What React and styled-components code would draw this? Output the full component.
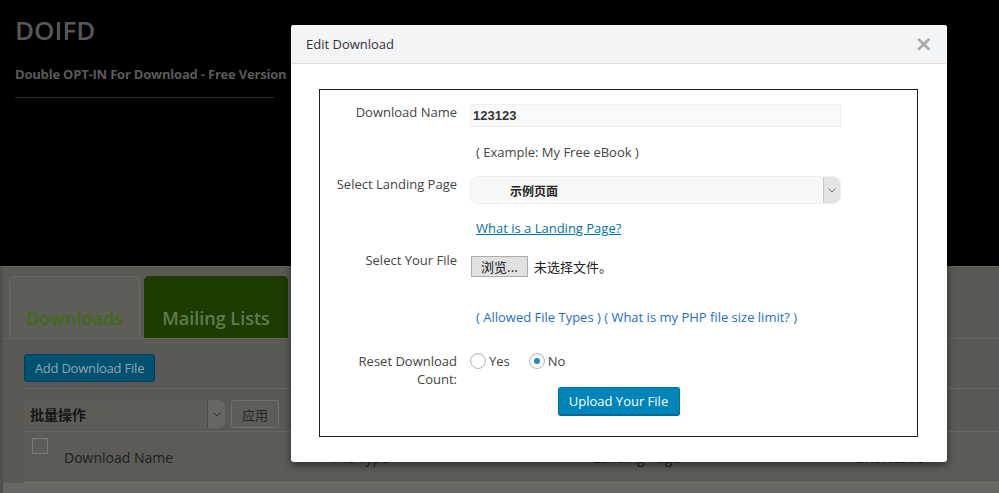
import React from 'react';
import styled, { createGlobalStyle } from 'styled-components';

const GlobalStyle = createGlobalStyle`
  html, body {
    margin: 0;
    padding: 0;
    background: #000000;
    font-family: "Open Sans", "Noto Sans CJK SC", sans-serif;
    overflow: hidden;
  }
  * {
    box-sizing: border-box;
  }
`;

const App = () => {
  return (
    <Page>
      <GlobalStyle />
      <Header>
        <Logo>DOIFD</Logo>
        <Subtitle>Double OPT-IN For Download - Free Version</Subtitle>
        <Rule />
      </Header>

      <Panel>
        <Tabs>
          <Tab active>Downloads</Tab>
          <Tab>Mailing Lists</Tab>
        </Tabs>
        <TabBody>
          <AddButton>Add Download File</AddButton>
          <Divider />
          <BulkRow>
            <BulkSelect>
              <span>批量操作</span>
              <BulkArrow>
                <svg width="8" height="5" viewBox="0 0 8 5">
                  <path d="M0.5 0.5 L4 4 L7.5 0.5" fill="none" stroke="#2a2a2a" strokeWidth="1" />
                </svg>
              </BulkArrow>
            </BulkSelect>
            <ApplyButton>应用</ApplyButton>
          </BulkRow>
        </TabBody>
        <TableHead>
          <CheckCell>
            <Check />
          </CheckCell>
          <HeadCell>Download Name</HeadCell>
          <HeadCell>File Type</HeadCell>
          <HeadCell>Landing Page</HeadCell>
          <HeadCell>Shortcode</HeadCell>
        </TableHead>
        <TableRest />
      </Panel>

      <Modal>
        <ModalHeader>
          <ModalTitle>Edit Download</ModalTitle>
          <Close>×</Close>
        </ModalHeader>
        <ModalBody>
          <FormBox>
            <Row top={13}>
              <Label>Download Name</Label>
              <TextInput>123123</TextInput>
            </Row>
            <Row top={16}>
              <Label />
              <Hint>( Example: My Free eBook )</Hint>
            </Row>
            <Row top={14}>
              <Label>Select Landing Page</Label>
              <Select>
                <SelectText>示例页面</SelectText>
                <SelectArrow>
                  <svg width="8" height="5" viewBox="0 0 8 5">
                    <path d="M0.5 0.5 L4 4 L7.5 0.5" fill="none" stroke="#777" strokeWidth="1" />
                  </svg>
                </SelectArrow>
              </Select>
            </Row>
            <Row top={15}>
              <Label />
              <Link>What is a Landing Page?</Link>
            </Row>
            <Row top={14}>
              <Label>Select Your File</Label>
              <FileField>
                <FileButton>浏览...</FileButton>
                <FileText>未选择文件。</FileText>
              </FileField>
            </Row>
            <Row top={31}>
              <Label />
              <Allowed>( Allowed File Types ) ( What is my PHP file size limit? )</Allowed>
            </Row>
            <Row top={26}>
              <Label>
                Reset Download
                <br />
                Count:
              </Label>
              <Radios>
                <RadioItem>
                  <Radio />
                  Yes
                </RadioItem>
                <RadioItem>
                  <Radio checked />
                  No
                </RadioItem>
              </Radios>
            </Row>
            <Submit>
              <UploadButton>Upload Your File</UploadButton>
            </Submit>
          </FormBox>
        </ModalBody>
      </Modal>
    </Page>
  );
};

export default App;

const Page = styled.div`
  width: 999px;
  height: 493px;
  background: #000000;
  position: relative;
  overflow: hidden;
`;

const Header = styled.div`
  height: 266px;
  padding: 13px 0 0 15px;
`;

const Logo = styled.div`
  font-size: 26px;
  line-height: 34px;
  color: #575757;
  font-weight: 600;
`;

const Subtitle = styled.div`
  margin-top: 18px;
  font-size: 13px;
  line-height: 18px;
  font-weight: 700;
  letter-spacing: -0.2px;
  color: #5a5a5a;
`;

const Rule = styled.div`
  margin-top: 14px;
  width: 259px;
  height: 1px;
  background: #2c2c2c;
`;

const Panel = styled.div`
  background: #5a5953;
  border-top: 1px solid #64635e;
  border-left: 3px solid #50504b;
  height: 227px;
`;

const Tabs = styled.div`
  display: flex;
  gap: 4px;
  padding: 9px 0 0 6px;
  border-bottom: 1px solid #66655f;
`;

const Tab = styled.div`
  width: ${(p) => (p.active ? '131px' : '144px')};
  height: 62px;
  padding-top: 29px;
  text-align: center;
  border-radius: 5px 5px 0 0;
  font-size: 18px;
  font-weight: 600;
  line-height: 24px;
  background: ${(p) => (p.active ? '#5e5d58' : '#1e3c00')};
  color: ${(p) => (p.active ? '#3f6b18' : '#5e7b50')};
  border: 1px solid ${(p) => (p.active ? '#6a6964' : '#1e3c00')};
  border-bottom: none;
`;

const TabBody = styled.div`
  padding: 15px 0 0 21px;
`;

const AddButton = styled.div`
  display: inline-flex;
  align-items: center;
  justify-content: center;
  width: 131px;
  height: 28px;
  background: #00516f;
  border: 1px solid #003f57;
  border-radius: 3px;
  color: #8fa6b1;
  font-size: 13px;
  letter-spacing: -0.2px;
  white-space: nowrap;
`;

const Divider = styled.div`
  margin-top: 6px;
  height: 1px;
  width: 100%;
  background: #686762;
`;

const BulkRow = styled.div`
  display: flex;
  gap: 6px;
  margin-top: 11px;
`;

const BulkSelect = styled.div`
  width: 201px;
  height: 28px;
  display: flex;
  align-items: center;
  justify-content: space-between;
  background: #5d5c57;
  border-radius: 4px;
  font-size: 14px;
  font-weight: 700;
  color: #161616;
  padding-left: 6px;
  overflow: hidden;
  span {
    font-family: "Noto Sans CJK SC", sans-serif;
  }
`;

const BulkArrow = styled.div`
  width: 18px;
  height: 28px;
  display: flex;
  align-items: center;
  justify-content: center;
  background: #686764;
  border-left: 1px solid #4a4a46;
  border-radius: 0 6px 6px 0;
`;

const ApplyButton = styled.div`
  width: 48px;
  height: 28px;
  display: flex;
  align-items: center;
  justify-content: center;
  background: #5e5d59;
  border: 1px solid #727170;
  border-radius: 3px;
  font-size: 13px;
  color: #262626;
  font-family: "Noto Sans CJK SC", sans-serif;
`;

const TableHead = styled.div`
  display: grid;
  grid-template-columns: 40px 268px 261px 264px 1fr;
  height: 52px;
  margin: 3px 0 0 21px;
  border-top: 1px solid #686762;
  border-bottom: 1px solid #74736f;
  background: #5c5b56;
`;

const CheckCell = styled.div`
  padding: 6px 0 0 8px;
`;

const Check = styled.div`
  width: 16px;
  height: 16px;
  border: 1px solid #7a7a76;
  background: #5e5d59;
`;

const HeadCell = styled.div`
  padding-top: 17px;
  font-size: 14px;
  line-height: 18px;
  color: #1e1e1e;
`;

const TableRest = styled.div`
  height: 40px;
  background: #676766;
`;

const Modal = styled.div`
  position: absolute;
  left: 291px;
  top: 25px;
  width: 656px;
  height: 437px;
  background: #ffffff;
  border-radius: 3px;
  box-shadow: 0 3px 8px rgba(0, 0, 0, 0.5);
  overflow: hidden;
`;

const ModalHeader = styled.div`
  height: 39px;
  display: flex;
  align-items: center;
  justify-content: space-between;
  padding: 0 14px 0 15px;
  background: #f3f4f5;
  border-bottom: 1px solid #dcdcde;
`;

const ModalTitle = styled.div`
  font-size: 13px;
  color: #333333;
`;

const Close = styled.div`
  font-family: "DejaVu Sans", sans-serif;
  font-size: 22px;
  font-weight: 700;
  color: #a9a9a9;
  line-height: 22px;
`;

const ModalBody = styled.div`
  padding: 25px 29px 0 28px;
`;

const FormBox = styled.div`
  border: 1px solid #1e1e1e;
  height: 348px;
`;

const Row = styled.div`
  display: grid;
  grid-template-columns: 137px 1fr;
  column-gap: 13px;
  margin-top: ${(p) => p.top}px;
  align-items: start;
`;

const Label = styled.div`
  text-align: right;
  font-size: 13px;
  line-height: 18px;
  color: #444444;
`;

const TextInput = styled.div`
  margin-top: 1px;
  width: 371px;
  height: 23px;
  background: #f9f9f9;
  border: 1px solid #f1f1f1;
  font-family: "Liberation Sans", Arial, sans-serif;
  font-weight: 700;
  font-size: 13px;
  color: #333333;
  display: flex;
  align-items: center;
  padding-left: 2px;
`;

const Hint = styled.div`
  padding-left: 6px;
  font-size: 13px;
  line-height: 18px;
  color: #444444;
`;

const Select = styled.div`
  margin-top: 1px;
  width: 371px;
  height: 28px;
  display: flex;
  justify-content: space-between;
  background: #f8f8f8;
  border: 1px solid #eeeeee;
  border-radius: 8px;
  overflow: hidden;
`;

const SelectText = styled.div`
  padding-left: 39px;
  display: flex;
  align-items: center;
  font-family: "Noto Sans CJK SC", sans-serif;
  font-weight: 700;
  font-size: 12px;
  color: #222222;
`;

const SelectArrow = styled.div`
  width: 17px;
  display: flex;
  align-items: center;
  justify-content: center;
  background: #e4e4e4;
  border-left: 1px solid #c8c8c8;
`;

const Link = styled.a`
  padding-left: 6px;
  font-size: 13px;
  line-height: 18px;
  color: #0073aa;
  text-decoration: underline;
`;

const FileField = styled.div`
  margin-top: 5px;
  display: flex;
  align-items: center;
  gap: 6px;
`;

const FileButton = styled.div`
  width: 57px;
  height: 21px;
  margin-left: 1px;
  display: flex;
  align-items: center;
  justify-content: center;
  background: #e1e1e1;
  border: 1px solid #adadad;
  font-family: "Noto Sans CJK SC", sans-serif;
  font-size: 13px;
  color: #111111;
`;

const FileText = styled.div`
  font-family: "Noto Sans CJK SC", sans-serif;
  font-size: 13px;
  color: #222222;
`;

const Allowed = styled.div`
  padding-left: 6px;
  font-size: 13px;
  line-height: 18px;
  color: #1e6fc4;
`;

const Radios = styled.div`
  display: flex;
  gap: 19px;
  font-size: 13px;
  line-height: 18px;
  color: #444444;
`;

const RadioItem = styled.label`
  display: flex;
  align-items: center;
  gap: 3px;
`;

const Radio = styled.span`
  width: 16px;
  height: 16px;
  border-radius: 50%;
  border: 1px solid #b4b9be;
  background: #ffffff;
  box-shadow: inset 0 1px 2px rgba(0, 0, 0, 0.1);
  display: flex;
  align-items: center;
  justify-content: center;
  &::after {
    content: '';
    width: 6px;
    height: 6px;
    border-radius: 50%;
    background: ${(p) => (p.checked ? '#1e8cbe' : 'transparent')};
  }
`;

const Submit = styled.div`
  display: flex;
  justify-content: center;
  margin-top: -1px;
`;

const UploadButton = styled.div`
  width: 122px;
  height: 28px;
  display: flex;
  align-items: center;
  justify-content: center;
  background: #0085ba;
  border: 1px solid #0073aa;
  border-bottom-color: #006799;
  border-radius: 3px;
  box-shadow: 0 1px 0 #006799;
  color: #ffffff;
  font-size: 13px;
`;
